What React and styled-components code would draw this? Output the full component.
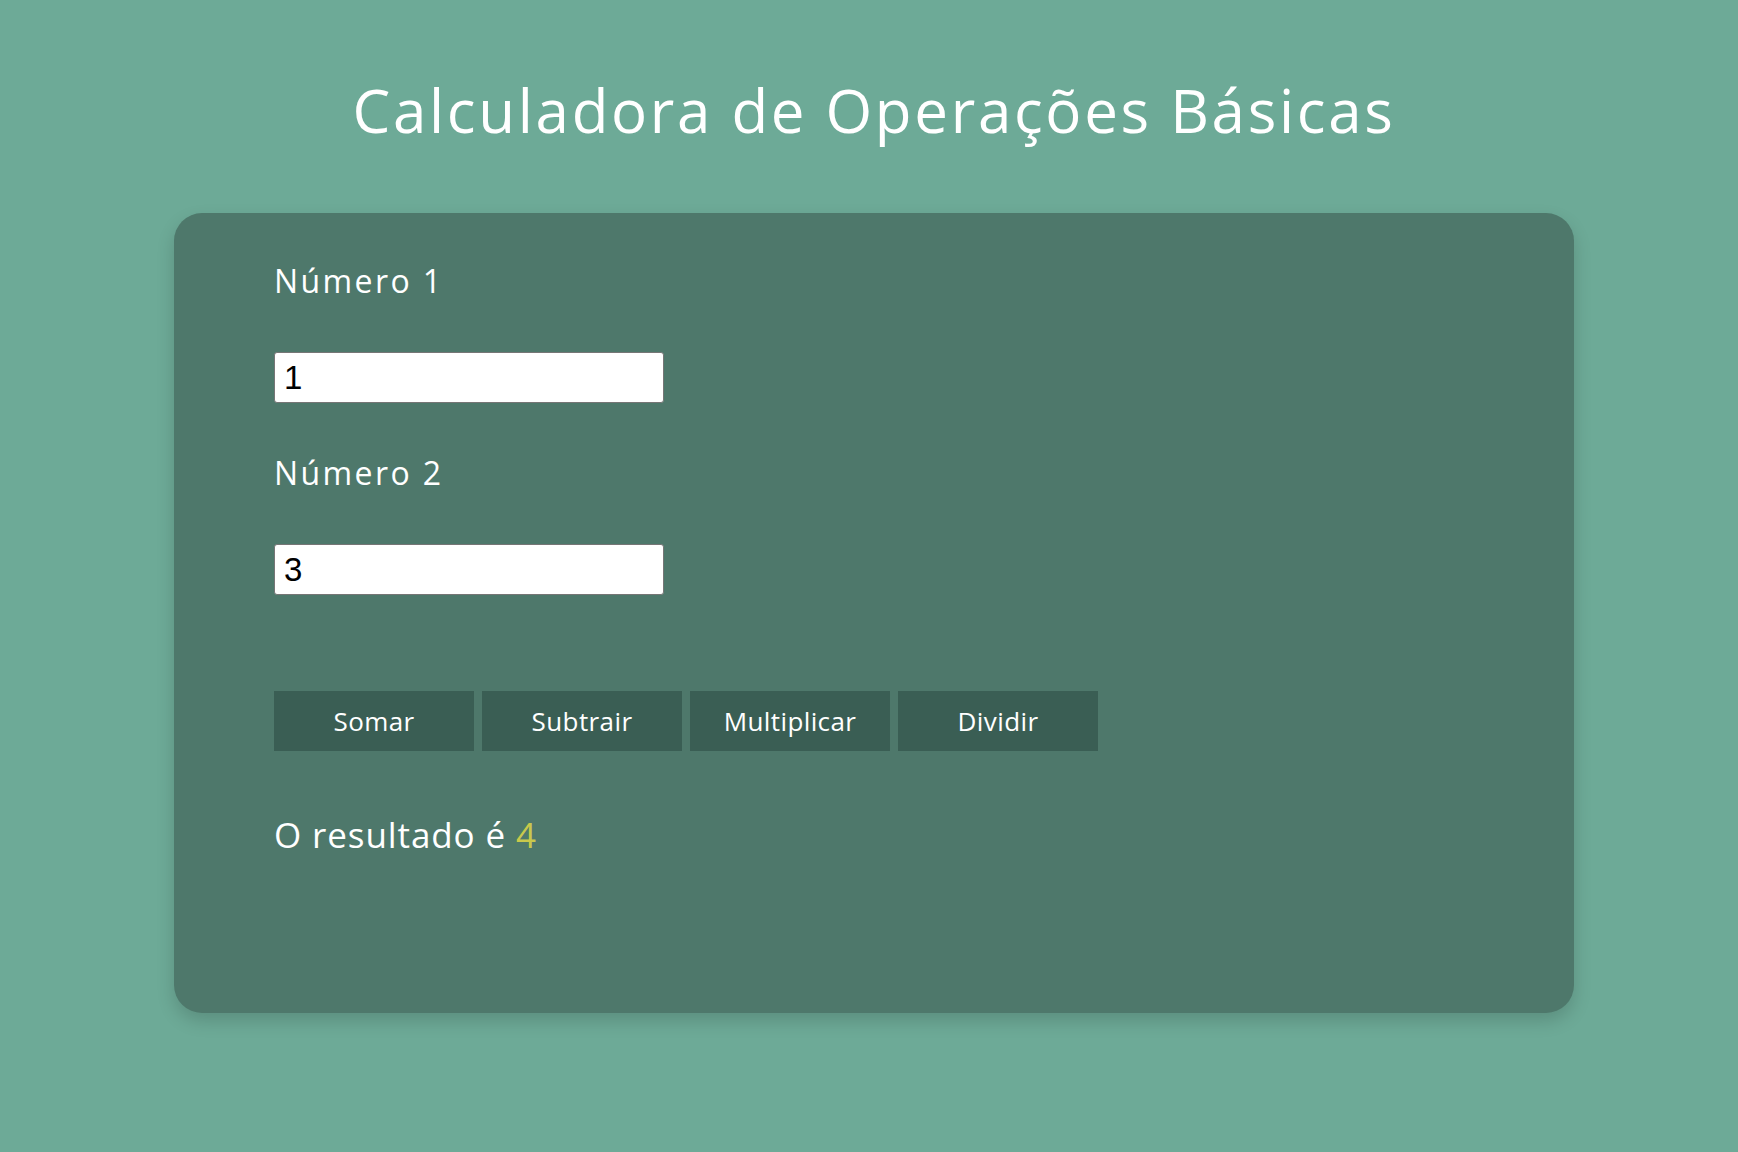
import React, { useState } from "react"
import styled, { createGlobalStyle } from "styled-components"

const GlobalStyle = createGlobalStyle`
  body {
    margin: 0;
    background-color: #6daa97;
    font-family: "Open Sans", "Noto Sans", sans-serif;
  }
`

const Page = styled.main`
  display: flex;
  flex-direction: column;
  align-items: center;
  padding: 69px 0 140px 10px;
`

const Title = styled.h1`
  margin: 0 0 62px;
  font-size: 60px;
  line-height: 82px;
  font-weight: 400;
  letter-spacing: 2.7px;
  color: #ffffff;
`

const Card = styled.section`
  box-sizing: border-box;
  width: 1400px;
  height: 800px;
  padding: 46px 100px;
  background-color: #4e786b;
  border-radius: 28px;
  box-shadow: 0 8px 18px rgba(0, 0, 0, 0.16);
  display: flex;
  flex-direction: column;
  align-items: flex-start;
`

const Field = styled.div`
  display: flex;
  flex-direction: column;
  align-items: flex-start;
  gap: 49px;
  margin-bottom: 48px;
`

const Label = styled.label`
  font-size: 32px;
  line-height: 44px;
  letter-spacing: 2.4px;
  color: #ffffff;
`

const Input = styled.input`
  box-sizing: border-box;
  width: 390px;
  height: 51px;
  padding: 0 9px;
  border: 1px solid #767676;
  border-radius: 3px;
  background: #ffffff;
  font-family: "Liberation Sans", Arial, sans-serif;
  font-size: 33px;
  color: #000000;
  outline: none;
`

const ButtonRow = styled.div`
  display: flex;
  gap: 8px;
  margin-top: 48px;
`

const OpButton = styled.button`
  width: 200px;
  height: 60px;
  border: none;
  background-color: #3a5e54;
  color: #ffffff;
  font-family: "Open Sans", "Noto Sans", sans-serif;
  font-size: 26px;
  letter-spacing: 0.4px;
  cursor: pointer;
`

const Result = styled.p`
  margin: 60px 0 0;
  font-size: 35px;
  line-height: 48px;
  letter-spacing: 0.9px;
  color: #ffffff;
`

const Value = styled.span`
  color: #c8c84c;
`

const ops = [
  { label: "Somar", fn: (a, b) => a + b },
  { label: "Subtrair", fn: (a, b) => a - b },
  { label: "Multiplicar", fn: (a, b) => a * b },
  { label: "Dividir", fn: (a, b) => a / b },
]

export default function App() {
  const [n1, setN1] = useState("1")
  const [n2, setN2] = useState("3")
  const [result, setResult] = useState(4)

  return (
    <>
      <GlobalStyle />
      <Page>
        <Title>Calculadora de Operações Básicas</Title>
        <Card>
          <Field>
            <Label htmlFor="n1">Número 1</Label>
            <Input id="n1" value={n1} onChange={e => setN1(e.target.value)} />
          </Field>
          <Field>
            <Label htmlFor="n2">Número 2</Label>
            <Input id="n2" value={n2} onChange={e => setN2(e.target.value)} />
          </Field>
          <ButtonRow>
            {ops.map(op => (
              <OpButton
                key={op.label}
                onClick={() => setResult(op.fn(Number(n1), Number(n2)))}
              >
                {op.label}
              </OpButton>
            ))}
          </ButtonRow>
          <Result>
            O resultado é <Value>{result}</Value>
          </Result>
        </Card>
      </Page>
    </>
  )
}
